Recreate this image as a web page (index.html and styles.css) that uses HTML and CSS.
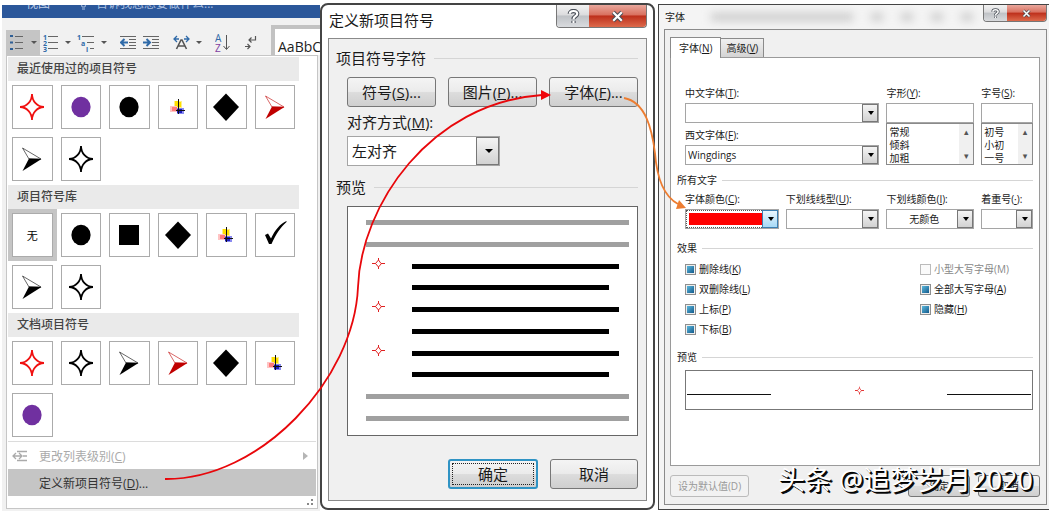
FILE: index.html
```html
<!DOCTYPE html>
<html lang="zh-CN">
  <head>
    <meta charset="UTF-8" />
    <meta name="viewport" content="width=device-width, initial-scale=1.0" />
    <title>定义新项目符号</title>
    <link rel="stylesheet" href="styles.css">
  </head>
  <body>
    <!-- shared bullet shapes -->
    <svg class="defs" width="0" height="0">
      <symbol id="star" viewBox="-1 -1 26 28">
        <path d="M12 0A12 13 0 0 0 24 13A12 13 0 0 0 12 26A12 13 0 0 0 0 13A12 13 0 0 0 12 0Z" fill="none" stroke="currentColor" stroke-width="1.8" />
      </symbol>
      <symbol id="star-small" viewBox="0 0 13 11">
        <path d="M6.500 0V2L9 5.500H13H9.500L6.500 9V11V9L3.500 5.500H0H3.500L6.500 2" fill="none" stroke="currentColor" stroke-width="1" />
      </symbol>
      <symbol id="dot" viewBox="0 0 26 28">
        <ellipse cx="13" cy="14" rx="9.600" ry="10.300" fill="currentColor" />
      </symbol>
      <symbol id="square" viewBox="0 0 26 28">
        <path d="M3 4H23V24H3Z" fill="currentColor" />
      </symbol>
      <symbol id="diamond" viewBox="0 0 26 28">
        <path d="M13 0.500L26 14L13 28L0 14Z" fill="currentColor" />
      </symbol>
      <symbol id="arrow" viewBox="0 0 26 28">
        <path d="M3.500 3L22 14L10 14Z" fill="#fff" stroke="currentColor" stroke-width=".6" />
        <path d="M10 13.500L22.500 14L3.500 26Z" fill="currentColor" />
      </symbol>
      <symbol id="flag" viewBox="0 0 26 28">
        <path d="M9 8H17V15H9Z" fill="#fff08a" />
        <path d="M10 8H13V14H10ZM14 9H16V14H14Z" fill="#ffe000" />
        <path d="M5 13H12V19H5Z" fill="#ffc4c4" />
        <path d="M7 14H12V18H7Z" fill="#ff7a7a" />
        <path d="M12 15H19V21H12Z" fill="#8a8af0" />
        <path d="M12 16H17V20H12Z" fill="#1c1cc0" />
        <path d="M13.500 6V21M11 17.500H20" stroke="#111" stroke-width="1" />
      </symbol>
      <symbol id="check" viewBox="0 0 26 28">
        <path d="M3 14L6 12.500L9 17.500C13 9 18 3 24.500 0L24.500 1C18 7 14 13 9.500 23H7Z" fill="currentColor" />
      </symbol>
    </svg>

    <main class="screen">
      <section class="word">
        <div class="tabs-bar"><span>视图</span><svg width="7" height="14"><path d="M1 4C1 1 6 1 6 4C6 6 5 7 5 9H2C2 7 1 6 1 4M2 11H5" fill="none" stroke="#a9bfe0" /></svg><span class="tell">告诉我您想要做什么...</span></div>
        <div class="ribbon">
          <button class="tool active" aria-label="项目符号">
            <svg width="16" height="18"><path d="M1 2H4M1 8.500H4M1 15H4" stroke="#2f5f95" stroke-width="2" /><path d="M6 2.500H14M6 8.500H14M6 14.500H14" stroke="#666" /></svg><i></i>
          </button>
          <button class="tool" aria-label="编号">
            <svg width="16" height="18"><g class="num"><text x="0" y="6">1</text><text x="0" y="12">2</text><text x="0" y="18">3</text></g><path d="M5 2.500H15M5 8.500H15M5 14.500H15" stroke="#666" /></svg><i></i>
          </button>
          <button class="tool" aria-label="多级列表">
            <svg width="18" height="18"><g class="num"><text x="0" y="6">1</text><text x="4" y="12">a</text><text x="9" y="18">i</text></g><path d="M5 2.500H17M10 8.500H17M13 14.500H17" stroke="#666" /></svg><i></i>
          </button>
          <hr>
          <button class="tool" aria-label="减少缩进">
            <svg width="17" height="18"><path d="M0 2.500H16M9 5.500H16M9 8.500H16M9 11.500H16M0 14.500H16" stroke="#666" /><path d="M1 8.500H8M4.500 5L1 8.500L4.500 12" stroke="#2f6aa8" stroke-width="2" fill="none" /></svg>
          </button>
          <button class="tool" aria-label="增加缩进">
            <svg width="17" height="18"><path d="M0 2.500H16M9 5.500H16M9 8.500H16M9 11.500H16M0 14.500H16" stroke="#666" /><path d="M0 8.500H7M3.500 5L7 8.500L3.500 12" stroke="#2f6aa8" stroke-width="2" fill="none" /></svg>
          </button>
          <hr>
          <button class="tool" aria-label="中文版式">
            <svg width="17" height="18"><path d="M3.500 15L8 6H9L13.500 15M5.500 12H11.500" stroke="#555" stroke-width="1.600" fill="none" /><path d="M1 5H6M4 2L1 5L4 8M16 5H11M13 2L16 5L13 8" stroke="#2f6aa8" stroke-width="1.300" fill="none" /></svg><i></i>
          </button>
          <hr>
          <button class="tool" aria-label="排序">
            <svg width="16" height="20"><text class="az a" x="0" y="9">A</text><text class="az z" x="0" y="19">Z</text><path d="M11.500 2V16M8.500 13L11.500 16.500L14.500 13" stroke="#555" fill="none" /></svg>
          </button>
          <hr>
          <button class="tool" aria-label="显示编辑标记">
            <svg width="13" height="18"><path d="M11.500 2V6H5M7.500 3.500L5 6L7.500 8.500M1 12.500H6M3.500 10L6 12.500L3.500 15" stroke="#555" fill="none" stroke-width="1.200" /></svg>
          </button>
          <div class="styles">AaBbC</div>
        </div>

        <div class="menu">
          <h3>最近使用过的项目符号</h3>
          <div class="bullets">
            <div class="cell"><button class="red" aria-label="红色四角星"><svg><use href="#star" /></svg></button></div>
            <div class="cell"><button class="purple" aria-label="紫色圆点"><svg><use href="#dot" /></svg></button></div>
            <div class="cell"><button aria-label="圆点"><svg><use href="#dot" /></svg></button></div>
            <div class="cell"><button aria-label="图片"><svg><use href="#flag" /></svg></button></div>
            <div class="cell"><button aria-label="菱形"><svg><use href="#diamond" /></svg></button></div>
            <div class="cell"><button class="dark-red" aria-label="红色箭头"><svg><use href="#arrow" /></svg></button></div>
            <div class="cell"><button aria-label="箭头"><svg><use href="#arrow" /></svg></button></div>
            <div class="cell"><button aria-label="四角星"><svg><use href="#star" /></svg></button></div>
          </div>
          <h3>项目符号库</h3>
          <div class="bullets">
            <div class="cell selected"><button>无</button></div>
            <div class="cell"><button aria-label="圆点"><svg><use href="#dot" /></svg></button></div>
            <div class="cell"><button aria-label="方块"><svg><use href="#square" /></svg></button></div>
            <div class="cell"><button aria-label="菱形"><svg><use href="#diamond" /></svg></button></div>
            <div class="cell"><button aria-label="图片"><svg><use href="#flag" /></svg></button></div>
            <div class="cell"><button aria-label="对勾"><svg><use href="#check" /></svg></button></div>
            <div class="cell"><button aria-label="箭头"><svg><use href="#arrow" /></svg></button></div>
            <div class="cell"><button aria-label="四角星"><svg><use href="#star" /></svg></button></div>
          </div>
          <h3>文档项目符号</h3>
          <div class="bullets">
            <div class="cell"><button class="red" aria-label="红色四角星"><svg><use href="#star" /></svg></button></div>
            <div class="cell"><button aria-label="四角星"><svg><use href="#star" /></svg></button></div>
            <div class="cell"><button aria-label="箭头"><svg><use href="#arrow" /></svg></button></div>
            <div class="cell"><button class="dark-red" aria-label="红色箭头"><svg><use href="#arrow" /></svg></button></div>
            <div class="cell"><button aria-label="菱形"><svg><use href="#diamond" /></svg></button></div>
            <div class="cell"><button aria-label="图片"><svg><use href="#flag" /></svg></button></div>
            <div class="cell"><button class="purple" aria-label="紫色圆点"><svg><use href="#dot" /></svg></button></div>
          </div>
          <div class="commands">
            <button class="command" disabled>
              <svg width="16" height="12"><path d="M5 1.500H15M11 6H15M5 10.500H15M1 6H10M4 3L1 6L4 9M7 3L10 6L7 9" stroke="#aaa" stroke-width="1.300" fill="none" /></svg>
              <span>更改列表级别(<u>C</u>)</span>
              <svg width="5" height="8"><path d="M0 0L5 4L0 8Z" fill="#b5b5b5" /></svg>
            </button>
            <button class="command hover"><span>定义新项目符号(<u>D</u>)...</span></button>
          </div>
          <svg class="grip" width="7" height="7"><path d="M5 1H7M1 5H3M5 5H7" stroke="#888" stroke-width="2" /></svg>
        </div>
      </section>

      <section class="dialog define">
        <header class="title">
          <h2>定义新项目符号</h2>
          <div class="win-buttons">
            <button class="help" aria-label="帮助"><svg viewBox="0 0 12 14"><path d="M2.500 4.500C2.500 1 9.500 1 9.500 4.500C9.500 7 6 6.500 6 9.500M6 11V13" class="halo" /><path d="M2.500 4.500C2.500 1 9.500 1 9.500 4.500C9.500 7 6 6.500 6 9.500M6 11V13" class="line" /></svg></button>
            <button class="close" aria-label="关闭"><svg viewBox="0 0 12 14"><path d="M2 3L10 11M10 3L2 11" class="halo" /><path d="M2 3L10 11M10 3L2 11" class="line" /></svg></button>
          </div>
        </header>
        <form class="dialog-body">
          <h4>项目符号字符</h4>
          <div class="indent">
            <div class="row">
              <button type="button" class="btn">符号(<u>S</u>)...</button>
              <button type="button" class="btn">图片(<u>P</u>)...</button>
              <button type="button" class="btn">字体(<u>F</u>)...</button>
            </div>
            <label for="align">对齐方式(<u>M</u>):</label>
            <div class="combo align">
              <select id="align"><option>左对齐</option></select>
            </div>
          </div>
          <h4>预览</h4>
          <div class="indent">
            <div class="preview">
              <div class="line"></div>
              <div class="line"></div>
              <div class="item"><svg><use href="#star-small" /></svg><div class="text"></div></div>
              <div class="item"><div class="text short"></div></div>
              <div class="item"><svg><use href="#star-small" /></svg><div class="text"></div></div>
              <div class="item"><div class="text short"></div></div>
              <div class="item"><svg><use href="#star-small" /></svg><div class="text"></div></div>
              <div class="item"><div class="text short"></div></div>
              <div class="line"></div>
              <div class="line"></div>
            </div>
            <div class="row actions">
              <button type="button" class="btn default">确定</button>
              <button type="button" class="btn">取消</button>
            </div>
          </div>
        </form>
      </section>

      <section class="dialog font">
        <header class="title">
          <h2>字体</h2>
          <div class="ghost"><b></b><b></b><b></b><b></b><b></b></div>
          <div class="win-buttons">
            <button class="help" aria-label="帮助"><svg viewBox="0 0 12 14"><path d="M2.500 4.500C2.500 1 9.500 1 9.500 4.500C9.500 7 6 6.500 6 9.500M6 11V13" class="halo" /><path d="M2.500 4.500C2.500 1 9.500 1 9.500 4.500C9.500 7 6 6.500 6 9.500M6 11V13" class="line" /></svg></button>
            <button class="close" aria-label="关闭"><svg viewBox="0 0 12 14"><path d="M2 3L10 11M10 3L2 11" class="halo" /><path d="M2 3L10 11M10 3L2 11" class="line" /></svg></button>
          </div>
        </header>
        <form class="dialog-body">
          <nav class="tabs">
            <button type="button" class="tab current">字体(<u>N</u>)</button>
            <button type="button" class="tab">高级(<u>V</u>)</button>
          </nav>
          <div class="panel">
            <div class="fields top">
              <div class="wide">
                <label for="cjk">中文字体(<u>T</u>):</label>
                <div class="combo"><select id="cjk"><option></option></select></div>
                <label for="latin">西文字体(<u>F</u>):</label>
                <div class="combo"><select id="latin"><option>Wingdings</option></select></div>
              </div>
              <div>
                <label for="style">字形(<u>Y</u>):</label>
                <input type="text" id="style">
                <div class="list">
                  <select size="3" aria-label="字形列表"><option>常规</option><option>倾斜</option><option>加粗</option></select>
                </div>
              </div>
              <div>
                <label for="size">字号(<u>S</u>):</label>
                <input type="text" id="size">
                <div class="list">
                  <select size="3" aria-label="字号列表"><option>初号</option><option>小初</option><option>一号</option></select>
                </div>
              </div>
            </div>
            <h4>所有文字</h4>
            <div class="fields">
              <div>
                <label for="color">字体颜色(<u>C</u>):</label>
                <div class="combo color"><select id="color"><option></option></select></div>
              </div>
              <div>
                <label for="line">下划线线型(<u>U</u>):</label>
                <div class="combo"><select id="line"><option></option></select></div>
              </div>
              <div>
                <label for="line-color">下划线颜色(<u>I</u>):</label>
                <div class="combo center"><select id="line-color"><option>无颜色</option></select></div>
              </div>
              <div>
                <label for="mark">着重号(<u>·</u>):</label>
                <div class="combo"><select id="mark"><option></option></select></div>
              </div>
            </div>
            <h4>效果</h4>
            <div class="checks">
              <div>
                <label><input type="checkbox">删除线(<u>K</u>)</label>
                <label><input type="checkbox">双删除线(<u>L</u>)</label>
                <label><input type="checkbox">上标(<u>P</u>)</label>
                <label><input type="checkbox">下标(<u>B</u>)</label>
              </div>
              <div>
                <label class="off"><input type="checkbox" disabled>小型大写字母(M)</label>
                <label><input type="checkbox">全部大写字母(<u>A</u>)</label>
                <label><input type="checkbox">隐藏(<u>H</u>)</label>
              </div>
            </div>
            <h4>预览</h4>
            <div class="sample"><span></span><svg><use href="#star-small" /></svg><span></span></div>
          </div>
          <div class="footer">
            <button type="button" class="btn set-default" disabled>设为默认值(D)</button>
            <button type="button" class="btn">确定</button>
            <button type="button" class="btn">取消</button>
          </div>
        </form>
        <div class="watermark">头条 @追梦岁月2020</div>
      </section>

      <svg class="arrows" viewBox="0 0 1049 511">
        <path d="M165 479C260 480 354 380 358 287C361 205 430 103 542 95" fill="none" stroke="#e8070b" stroke-width="1.800" />
        <path d="M541 90L551 95L541 100Z" fill="#f0050a" />
        <path d="M624 98C646 102 652 130 655 153C657 180 665 197 678 204" fill="none" stroke="#ed7d31" stroke-width="1.800" />
        <path d="M679 200L686 208L676 209Z" fill="#ed7d31" />
      </svg>
    </main>
  </body>
</html>
```

FILE: styles.css
```css
* {
  margin: 0;
  padding: 0;
  box-sizing: border-box;
}
body {
  background: #fff;
  color: #1a1a1a;
  font-family: "Open Sans", "Noto Sans CJK SC", sans-serif;
  overflow-x: hidden;
}
button,
input,
select {
  font: inherit;
  color: inherit;
}
svg {
  display: block;
}
.defs {
  position: absolute;
}
.screen {
  position: relative;
  display: grid;
  grid-template-columns: 320fr 338fr 391fr;
}
.arrows {
  position: absolute;
  top: 0;
  left: 0;
  width: 100%;
  pointer-events: none;
}

/* word window */
.word {
  margin: 5px 0 0 2px;
  background: #f1f1f1;
  font-size: 12px;
  min-width: 0;
}
.tabs-bar {
  display: flex;
  align-items: flex-end;
  height: 13px;
  padding: 0 0 6px 24px;
  background: #2b579a;
  color: #c3d2ea;
  line-height: 16px;
  overflow: hidden;
}
.tabs-bar svg {
  margin: 0 9px 0 30px;
  flex: none;
}
.tabs-bar .tell {
  color: #a9bfe0;
}
.ribbon {
  display: flex;
  height: 37px;
  padding-left: 4px;
  overflow: hidden;
}
.tool {
  display: flex;
  align-items: center;
  gap: 6px;
  height: 25px;
  margin-top: 12px;
  padding: 0 3px;
  border: none;
  background: none;
}
.tool.active {
  background: #c5c5c5;
}
.tool i {
  border: 3px solid transparent;
  border-top-color: #555;
  border-bottom: none;
}
.tool .num {
  font-size: 7px;
  font-weight: bold;
  fill: #2f6aa8;
}
.tool .az {
  font-size: 10px;
}
.tool .a {
  fill: #2f6aa8;
}
.tool .z {
  fill: #8040a0;
}
.ribbon hr {
  width: 1px;
  height: 32px;
  margin: 5px 4px 0 3px;
  border: none;
  background: #d4d4d4;
}
.styles {
  flex: 1;
  margin: 7px 0 0 11px;
  padding: 9px 0 0 3px;
  border: solid #c2c2c2;
  border-width: 4px 0 0 4px;
  background: #fff;
  color: #222;
  font-size: 14px;
  line-height: 18px;
  white-space: nowrap;
}

/* bullet menu */
.menu {
  margin: 0 2px 0 4px;
  padding: 1px;
  border: 1px solid #c6c6c6;
  background: #fff;
}
.menu h3 {
  margin-right: 17px;
  padding-left: 9px;
  background: #eaeaea;
  color: #444;
  font-size: 12px;
  font-weight: 500;
  line-height: 24px;
}
.bullets {
  display: grid;
  grid-template-columns: repeat(6, 1fr);
  margin-right: 17px;
}
.cell {
  height: 52px;
  padding: 4px;
}
.cell.selected {
  background: #c5c5c5;
}
.cell button {
  display: flex;
  align-items: center;
  justify-content: center;
  width: 100%;
  height: 44px;
  border: 1px solid #ababab;
  background: #fff;
  color: #000;
  font-size: 11px;
}
.cell svg {
  width: 26px;
  height: 28px;
}
.cell .red {
  color: #f01010;
}
.cell .purple {
  color: #7030a0;
}
.cell .dark-red {
  color: #c00000;
}
.commands {
  border-top: 1px solid #dcdcdc;
}
.command {
  display: flex;
  align-items: center;
  width: 100%;
  height: 27px;
  padding: 0 8px 0 4px;
  border: none;
  background: none;
  color: #333;
}
.command span {
  flex: 1;
  text-align: left;
  margin-left: 11px;
}
.command:disabled {
  color: #aaa;
}
.command.hover {
  background: #c5c5c5;
}
.command.hover span {
  margin-left: 27px;
}
.grip {
  margin: 3px 3px 1px auto;
}

/* dialogs */
.dialog {
  position: relative;
  min-width: 0;
  border: 1px solid #444;
  background: #fff;
}
.title {
  display: flex;
  align-items: flex-start;
}
.title h2 {
  flex: 1;
  font-weight: normal;
}
.win-buttons {
  display: flex;
  border: 1px solid #777;
  border-top: none;
  border-radius: 0 0 4px 4px;
  overflow: hidden;
}
.win-buttons button {
  display: flex;
  align-items: center;
  justify-content: center;
  border: none;
}
.help {
  background: linear-gradient(#f2f2f2, #dcdcde 45%, #bfc2c6 50%, #d9dbde);
}
.close {
  background: linear-gradient(#e9a79c, #d9705f 45%, #bd2f1b 50%, #dd6a4c);
}
.halo {
  fill: none;
  stroke: #4a4f58;
  stroke-width: 4;
}
.line {
  fill: none;
}
.win-buttons .line {
  stroke: #fff;
  stroke-width: 2;
}
.dialog-body {
  border: 1px solid #8a8a8a;
  background: #f0f0f0;
}
.dialog h4 {
  display: flex;
  align-items: center;
  gap: 8px;
  font-weight: normal;
}
.dialog h4::after {
  content: "";
  flex: 1;
  height: 1px;
  background: #d5d5d5;
}
.dialog label {
  display: block;
  white-space: nowrap;
}
.btn {
  border: 1px solid #777;
  border-radius: 3px;
  background: linear-gradient(#f4f4f4, #ebebeb 48%, #dcdcdc 52%, #cfcfcf);
  white-space: nowrap;
}
.btn:disabled {
  border-color: #bbb;
  background: #f2f2f2;
  color: #999;
}
.row {
  display: flex;
  gap: 12px;
}
.combo {
  position: relative;
  border: 1px solid #a5a5a5;
  background: #fff;
}
.combo select {
  display: block;
  width: 100%;
  height: 100%;
  border: none;
  background: none;
  appearance: none;
}
/* drop-down button of a combo box */
.combo::after {
  content: "";
  position: absolute;
  top: 0;
  right: 0;
  bottom: 0;
  border: 1px solid #777;
  background: linear-gradient(#f4f4f4, #d2d2d2);
  pointer-events: none;
}
.combo::before {
  content: "";
  position: absolute;
  z-index: 1;
  top: 50%;
  border: 4px solid transparent;
  border-top-color: #000;
  border-bottom: none;
  transform: translateY(-50%);
  pointer-events: none;
}

/* define new bullet */
.define {
  margin: 3px 3px 2px 0;
  padding: 0 6px 7px;
  border-width: 2px;
  border-radius: 8px;
  font-size: 15px;
  line-height: 20px;
}
.define .title {
  height: 33px;
}
.define .title h2 {
  padding: 5px 0 0 1px;
  font-size: 15px;
  line-height: 20px;
}
.define .win-buttons button {
  height: 22px;
}
.define .help {
  width: 32px;
}
.define .close {
  width: 57px;
}
.define .win-buttons svg {
  width: 13px;
  height: 15px;
}
.define .dialog-body {
  padding: 9px 8px 11px 7px;
}
.define h4 {
  font-size: 15px;
  margin-bottom: 9px;
}
.indent {
  padding-left: 11px;
}
.define .btn {
  flex: 1;
  height: 30px;
}
.define label {
  margin: 5px 0 4px;
}
.align {
  width: 153px;
  height: 30px;
  margin-bottom: 11px;
}
.align select {
  padding-left: 4px;
}
.align::after {
  width: 21px;
}
.align::before {
  right: 6px;
}
.preview {
  display: flex;
  flex-direction: column;
  justify-content: space-between;
  height: 230px;
  padding: 13px 8px 14px 18px;
  border: 1px solid #666;
  background: #fff;
}
.preview .line {
  height: 5px;
  background: #a0a0a0;
}
.preview .item {
  display: flex;
  justify-content: flex-end;
  align-items: center;
  height: 5px;
  padding-right: 10px;
}
.preview svg {
  width: 13px;
  height: 11px;
  margin: 0 auto 6px 6px;
  color: #e02020;
}
.preview .text {
  width: 82%;
  height: 5px;
  background: #000;
}
.preview .short {
  width: 78%;
  margin-right: 10px;
}
.actions {
  margin-top: 23px;
  padding-left: 101px;
}
.define .default {
  border: 2px solid #2f93c4;
  outline: 1px dotted #222;
  outline-offset: -5px;
}

/* font dialog */
.font {
  margin: 4px 0 2px;
  padding: 0 2px 2px 5px;
  border-right: none;
  background: #f4f4f4;
  font-size: 10px;
  line-height: 16px;
}
.font .title {
  height: 24px;
}
.font .title h2 {
  flex: none;
  padding: 4px 0 0 1px;
  font-size: 10px;
}
.ghost {
  display: flex;
  flex: 1;
  gap: 18px;
  margin: 8px 10px 0 26px;
  filter: blur(4px);
}
.ghost b {
  width: 12px;
  height: 8px;
  background: #ccc;
}
.ghost b:first-child {
  flex: 1;
}
.font .win-buttons button {
  height: 16px;
}
.font .help {
  width: 23px;
}
.font .close {
  width: 39px;
}
.font .win-buttons svg {
  width: 9px;
  height: 11px;
}
.font .dialog-body {
  padding: 7px 6px 7px 5px;
}
.tabs {
  display: flex;
  align-items: flex-end;
}
.tab {
  height: 19px;
  padding: 0 5px;
  border: 1px solid #8a8a8a;
  border-left: none;
  border-bottom: none;
  background: linear-gradient(#f0f0f0, #d4d4d4);
}
.tab.current {
  position: relative;
  height: 21px;
  margin-bottom: -1px;
  padding: 0 8px;
  border-left: 1px solid #8a8a8a;
  background: #fff;
}
.panel {
  padding: 27px 6px 55px;
  border: 1px solid #9a9a9a;
  background: #fff;
}
.font h4 {
  margin-bottom: 3px;
  font-size: 10px;
  gap: 5px;
}
.fields {
  display: grid;
  grid-template-columns: 94fr 94fr 88fr 52fr;
  gap: 7px;
  padding-left: 8px;
  margin-bottom: 11px;
}
.fields.top {
  margin-bottom: 7px;
}
.fields > div {
  min-width: 0;
}
.fields .wide {
  grid-column: span 2;
}
.fields .wide .combo + label {
  margin-top: 4px;
}
.fields label {
  margin-bottom: 2px;
}
.fields .combo,
.fields input {
  display: block;
  width: 100%;
  height: 20px;
}
.fields input {
  border: 1px solid #a5a5a5;
}
.fields select {
  padding-left: 2px;
}
.fields .combo::after {
  width: 14px;
}
.fields .combo::before {
  right: 4px;
  border-width: 4px 3px 0;
}
.color select {
  background: #f00;
  background-clip: content-box;
  padding: 2px 15px 2px 2px;
}
.fields .color select {
  border: 1px dotted #555;
}
.fields .color::after {
  border-color: #3c7fb1;
  background: linear-gradient(#eaf6fd, #a7d9f5);
}
.center select {
  padding-right: 14px;
  text-align: center;
  text-align-last: center;
}
.list {
  position: relative;
  height: 42px;
  border: 1px solid #8a8a8a;
  background: #fff;
}
.list select {
  display: block;
  width: 100%;
  height: 40px;
  border: none;
  outline: none;
  background: none;
  scrollbar-width: none;
}
.list option {
  height: 13px;
  min-height: 0;
  padding: 0;
  line-height: 13px;
}
/* scroll bar strip with its two arrow heads */
.list::after {
  content: "▴\A▾";
  position: absolute;
  top: 0;
  right: 0;
  bottom: 0;
  width: 14px;
  background: #f0f0f0;
  color: #555;
  font: 9px/24px "DejaVu Sans", sans-serif;
  text-align: center;
  white-space: pre;
  margin: 0;
  display: flex;
  align-items: center;
  justify-content: center;
}
.checks {
  display: flex;
  padding-left: 8px;
  margin-bottom: 10px;
}
.checks div {
  flex: 2;
}
.checks div + div {
  flex: 1;
  padding-left: 9px;
}
.checks label {
  display: flex;
  align-items: center;
  height: 20px;
}
.checks input {
  width: 11px;
  height: 11px;
  margin-right: 3px;
  border: 1px solid #8e8f8f;
  background: linear-gradient(135deg, #5cb8dc, #135a8c) content-box, #eee;
  padding: 1px;
  appearance: none;
}
.checks .off {
  color: #888;
}
.checks .off input {
  border-color: #bbb;
  background: #fafafa;
}
.sample {
  display: flex;
  justify-content: space-between;
  align-items: center;
  height: 40px;
  margin: 5px 0 0 8px;
  padding: 0 1px;
  border: 1px solid #777;
}
.sample span {
  width: 84px;
  height: 1px;
  margin-top: 8px;
  background: #111;
}
.sample svg {
  width: 9px;
  height: 9px;
  color: #e02020;
}
.footer {
  display: flex;
  gap: 8px;
  margin-top: 9px;
}
.footer .btn {
  width: 62px;
  height: 22px;
}
.footer .set-default {
  width: 79px;
  margin-right: auto;
}
.watermark {
  position: absolute;
  right: 16px;
  bottom: 11px;
  color: #fff;
  font-size: 27px;
  line-height: 36px;
  text-shadow: 1px 1px 0 #000, 2px 2px 0 #111;
  white-space: nowrap;
}
```
